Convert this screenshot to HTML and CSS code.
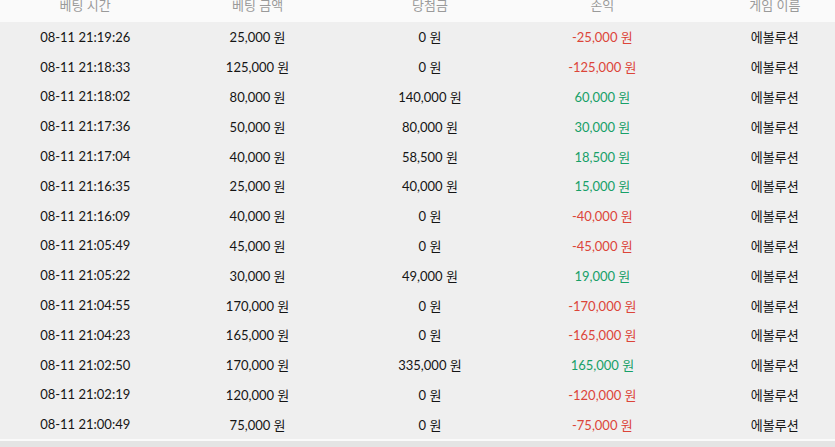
FILE: index.html
```html
<!DOCTYPE html>
<html lang="ko">
<head>
  <meta charset="UTF-8" />
  <title>베팅 내역</title>
  <link rel="stylesheet" href="styles.css">
</head>
<body>
  <div class="history">
    <table class="bets">
      <thead>
        <tr>
          <th>베팅 시간</th>
          <th>베팅 금액</th>
          <th>당첨금</th>
          <th>손익</th>
          <th>게임 이름</th>
        </tr>
      </thead>
      <tbody>
        <tr><td>08-11 21:19:26</td><td>25,000 원</td><td>0 원</td><td class="loss">-25,000 원</td><td>에볼루션</td></tr>
        <tr><td>08-11 21:18:33</td><td>125,000 원</td><td>0 원</td><td class="loss">-125,000 원</td><td>에볼루션</td></tr>
        <tr><td>08-11 21:18:02</td><td>80,000 원</td><td>140,000 원</td><td class="win">60,000 원</td><td>에볼루션</td></tr>
        <tr><td>08-11 21:17:36</td><td>50,000 원</td><td>80,000 원</td><td class="win">30,000 원</td><td>에볼루션</td></tr>
        <tr><td>08-11 21:17:04</td><td>40,000 원</td><td>58,500 원</td><td class="win">18,500 원</td><td>에볼루션</td></tr>
        <tr><td>08-11 21:16:35</td><td>25,000 원</td><td>40,000 원</td><td class="win">15,000 원</td><td>에볼루션</td></tr>
        <tr><td>08-11 21:16:09</td><td>40,000 원</td><td>0 원</td><td class="loss">-40,000 원</td><td>에볼루션</td></tr>
        <tr><td>08-11 21:05:49</td><td>45,000 원</td><td>0 원</td><td class="loss">-45,000 원</td><td>에볼루션</td></tr>
        <tr><td>08-11 21:05:22</td><td>30,000 원</td><td>49,000 원</td><td class="win">19,000 원</td><td>에볼루션</td></tr>
        <tr><td>08-11 21:04:55</td><td>170,000 원</td><td>0 원</td><td class="loss">-170,000 원</td><td>에볼루션</td></tr>
        <tr><td>08-11 21:04:23</td><td>165,000 원</td><td>0 원</td><td class="loss">-165,000 원</td><td>에볼루션</td></tr>
        <tr><td>08-11 21:02:50</td><td>170,000 원</td><td>335,000 원</td><td class="win">165,000 원</td><td>에볼루션</td></tr>
        <tr><td>08-11 21:02:19</td><td>120,000 원</td><td>0 원</td><td class="loss">-120,000 원</td><td>에볼루션</td></tr>
        <tr><td>08-11 21:00:49</td><td>75,000 원</td><td>0 원</td><td class="loss">-75,000 원</td><td>에볼루션</td></tr>
      </tbody>
    </table>
    <div class="footer-strip"></div>
  </div>
</body>
</html>
```

FILE: styles.css
```css
* {
  margin: 0;
  padding: 0;
  box-sizing: border-box;
}
body {
  background: #fafafa;
  font-family: Lato, "Noto Sans CJK KR", sans-serif;
  color: #151515;
  overflow: hidden;
}
.history {
  width: 862px;
  margin: -14px 0 0 -1px;
}
.bets {
  width: 100%;
  border-collapse: collapse;
  table-layout: fixed;
  font-size: 13px;
}
.bets th {
  height: 36px;
  font-weight: 400;
  color: #9a9a9a;
  background: #fafafa;
  text-align: center;
}
.bets tbody {
  background: #efefef;
}
.bets td {
  height: 29.8px;
  text-align: center;
}
.bets td.loss {
  color: #dc4539;
}
.bets td.win {
  color: #17a068;
}
.footer-strip {
  height: 6px;
  margin-top: 2px;
  background: #e4e4e4;
}
```
